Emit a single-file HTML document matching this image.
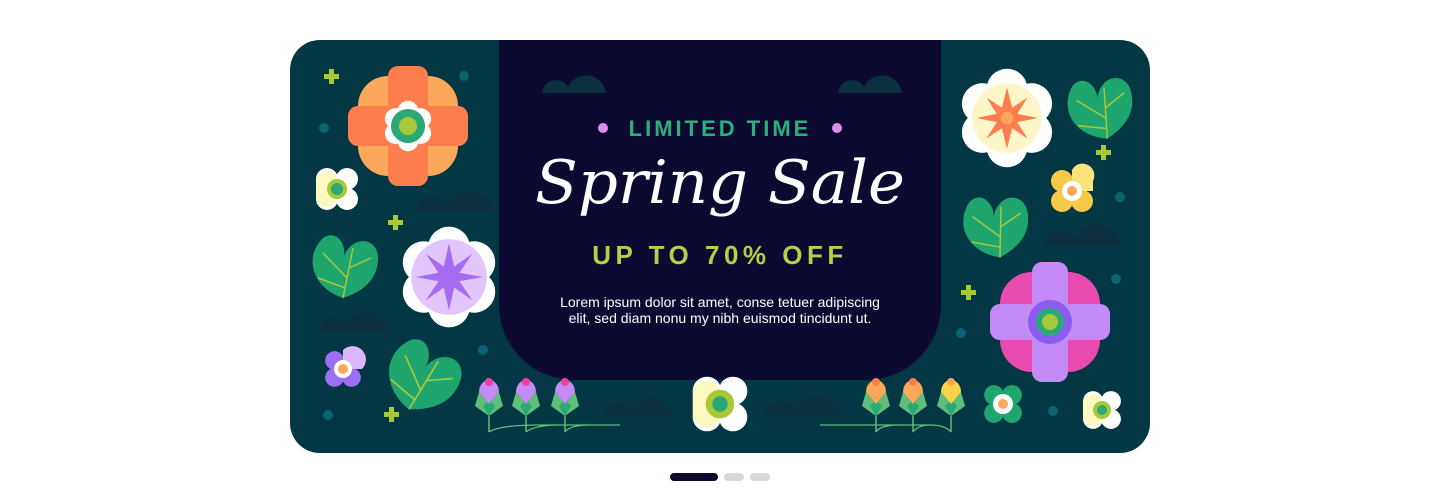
<!DOCTYPE html>
<html><head><meta charset="utf-8"><style>
html,body{margin:0;padding:0;background:#fff;width:1440px;height:498px;overflow:hidden}
svg{display:block}
</style></head><body>
<svg width="1440" height="498" viewBox="0 0 1440 498" xmlns="http://www.w3.org/2000/svg">
<defs>
<clipPath id="c"><rect x="290" y="40" width="860" height="413" rx="30"/></clipPath>
<g id="scal"><circle r="10" cx="0" cy="-14"/><circle r="10" cx="12" cy="-7"/><circle r="10" cx="12" cy="7"/><circle r="10" cx="0" cy="14"/><circle r="10" cx="-12" cy="7"/><circle r="10" cx="-12" cy="-7"/><circle r="16"/></g>
<g id="four"><circle cx="-10" cy="-10" r="11"/><circle cx="10" cy="-10" r="11"/><circle cx="10" cy="10" r="11"/><circle cx="-10" cy="10" r="11"/></g>
<g id="leaf"><path d="M0 40 C-30 30 -40 0 -20 -20 C-5 -30 5 -10 0 0 C10 -25 35 -20 35 0 C35 25 15 35 0 40Z" fill="#1fa66e"/><path d="M0 40 L10 -10 M4 20 L-20 -5 M6 10 L28 0 M2 30 L-25 20" stroke="#a8c83a" stroke-width="1.5" fill="none"/></g>
<g id="cloud" fill="#0b2f3d"><path d="M-30 0 A14 14 0 0 1 -4 -6 A20 20 0 0 1 34 0Z"/></g>
<g id="tulip"><path d="M-10 0 L-14 14 L0 24 L14 14 L10 0 L0 12Z" fill="#5fbf7a"/><path d="M-6 14 L0 24 L6 14 L0 8Z" fill="#2aa876"/><line x1="0" y1="24" x2="0" y2="40" stroke="#5fbf7a" stroke-width="1.5"/></g>
</defs>
<g clip-path="url(#c)">
<rect x="290" y="40" width="860" height="413" fill="#023743"/>
<path d="M499 40 H941 V305 A75 75 0 0 1 866 380 H574 A75 75 0 0 1 499 305Z" fill="#0c0a30"/>
<use href="#cloud" transform="translate(572,93)"/>
<use href="#cloud" transform="translate(868,93)"/>
<use href="#cloud" transform="translate(452,212) scale(1.2)"/>
<use href="#cloud" transform="translate(350,332) scale(1.1)"/>
<use href="#cloud" transform="translate(1080,246) scale(1.2)"/>
<use href="#cloud" transform="translate(636,417) scale(1.1)"/>
<use href="#cloud" transform="translate(800,417) scale(1.2)"/>
<g fill="#0c6472"><circle cx="464" cy="76" r="5"/><circle cx="324" cy="128" r="5"/><circle cx="483" cy="350" r="5"/><circle cx="328" cy="415" r="5"/><circle cx="1120" cy="197" r="5"/><circle cx="1116" cy="279" r="5"/><circle cx="961" cy="333" r="5"/><circle cx="1053" cy="411" r="5"/></g>
<g fill="#a8c83a"><path d="M329 69h5v5h5v5h-5v5h-5v-5h-5v-5h5z"/><path d="M393 215h5v5h5v5h-5v5h-5v-5h-5v-5h5z"/><path d="M389 407h5v5h5v5h-5v5h-5v-5h-5v-5h5z"/><path d="M1101 145h5v5h5v5h-5v5h-5v-5h-5v-5h5z"/><path d="M966 285h5v5h5v5h-5v5h-5v-5h-5v-5h5z"/></g>
<g transform="translate(408,126)">
<rect x="-50" y="-50" width="100" height="100" rx="30" fill="#fba85a"/>
<rect x="-20" y="-60" width="40" height="120" rx="10" fill="#fd7d4f"/>
<rect x="-60" y="-20" width="120" height="40" rx="10" fill="#fd7d4f"/>
<use href="#scal" fill="#fff" transform="scale(1.05)"/><circle r="17" fill="#2aa876"/><circle r="9" fill="#a8c83a"/>
</g>
<g transform="translate(337,189)"><use href="#four" fill="#fff"/><path d="M-21 -10 A11 11 0 0 1 0 -10 L0 10 A11 11 0 0 1 -21 10Z" fill="#fafac0"/><circle r="10" fill="#a8c83a"/><circle r="6" fill="#2aa876"/></g>
<g transform="translate(449,277) scale(2.1)"><use href="#scal" fill="#fff"/><circle r="18" fill="#e2c6fb"/><path d="M0 -16 L2.5 -5 L11 -11 L5 -2 L16 0 L5 2 L11 11 L2.5 5 L0 16 L-2.5 5 L-11 11 L-5 2 L-16 0 L-5 -2 L-11 -11 L-2.5 -5Z" fill="#a56bf0"/></g>
<use href="#leaf" transform="translate(343,258)"/>
<use href="#leaf" transform="translate(424,368) scale(1.1) rotate(20)"/>
<g transform="translate(343,369)"><use href="#four" fill="#9b6ef3" transform="scale(0.85)"/><path d="M0 -19 A10 10 0 0 1 19 0 L0 0Z" fill="#d9b8f8"/><circle r="9" fill="#fff"/><circle r="5" fill="#fba85a"/></g>
<g transform="translate(489,392)"><use href="#tulip"/><path d="M-10 0 A10 12 0 0 1 10 0 L0 12Z" fill="#c48bf6"/><circle cy="-10" r="4" fill="#f03fa5"/></g>
<g transform="translate(526,392)"><use href="#tulip"/><path d="M-10 0 A10 12 0 0 1 10 0 L0 12Z" fill="#c48bf6"/><circle cy="-10" r="4" fill="#f03fa5"/></g>
<g transform="translate(565,392)"><use href="#tulip"/><path d="M-10 0 A10 12 0 0 1 10 0 L0 12Z" fill="#c48bf6"/><circle cy="-10" r="4" fill="#f03fa5"/></g>
<g transform="translate(876,392)"><use href="#tulip"/><path d="M-10 0 A10 12 0 0 1 10 0 L0 12Z" fill="#fba85a"/><circle cy="-10" r="4" fill="#fd7d4f"/></g>
<g transform="translate(913,392)"><use href="#tulip"/><path d="M-10 0 A10 12 0 0 1 10 0 L0 12Z" fill="#fba85a"/><circle cy="-10" r="4" fill="#fd7d4f"/></g>
<g transform="translate(951,392)"><use href="#tulip"/><path d="M-10 0 A10 12 0 0 1 10 0 L0 12Z" fill="#f7d34a"/><circle cy="-10" r="4" fill="#fba85a"/></g>
<path d="M489 432 Q500 425 540 425 H620 M526 432 Q535 425 560 425 M565 432 Q570 425 590 425 M820 425 H930 Q945 425 951 432 M876 432 Q880 425 900 425 M913 432 Q918 425 930 425" stroke="#5fbf7a" stroke-width="1.3" fill="none"/>
<g transform="translate(720,404) scale(1.3)"><use href="#four" fill="#fff"/><path d="M-21 -10 A11 11 0 0 1 0 -10 L0 10 A11 11 0 0 1 -21 10Z" fill="#fafac0"/><circle r="11" fill="#a8c83a"/><circle r="6" fill="#2aa876"/></g>
<g transform="translate(1007,118) scale(2.05)"><use href="#scal" fill="#fff"/><circle r="17" fill="#fdf6c8"/><path d="M0 -15 L2.5 -5 L10 -10 L5 -2 L15 0 L5 2 L10 10 L2.5 5 L0 15 L-2.5 5 L-10 10 L-5 2 L-15 0 L-5 -2 L-10 -10 L-2.5 -5Z" fill="#fd7d4f"/><circle r="3" fill="#fba85a"/></g>
<use href="#leaf" transform="translate(1097,100) rotate(-15)"/>
<use href="#leaf" transform="translate(993,218) rotate(-10)"/>
<g transform="translate(1072,191)"><use href="#four" fill="#f7c948"/><path d="M0 -21 A11 11 0 0 1 21 -10 L21 0 L0 0Z" fill="#fbe27a"/><circle r="10" fill="#fff"/><circle r="5" fill="#fba85a"/></g>
<g transform="translate(1050,322)">
<rect x="-50" y="-50" width="100" height="100" rx="32" fill="#e94bb0"/>
<rect x="-18" y="-60" width="36" height="120" rx="10" fill="#c48bf6"/>
<rect x="-60" y="-18" width="120" height="36" rx="10" fill="#c48bf6"/>
<circle r="22" fill="#8a5cf0"/><circle r="14" fill="#2aa876"/><circle r="8" fill="#a8c83a"/>
</g>
<g transform="translate(1003,404)"><use href="#four" fill="#1fa66e" transform="scale(0.9)"/><circle r="10" fill="#fff"/><circle r="5" fill="#fba85a"/></g>
<g transform="translate(1102,410)"><use href="#four" fill="#fff" transform="scale(0.9)"/><path d="M-19 -9 A10 10 0 0 1 0 -9 L0 9 A10 10 0 0 1 -19 9Z" fill="#fafac0"/><circle r="9" fill="#a8c83a"/><circle r="5" fill="#2aa876"/></g>
<circle cx="603" cy="128" r="5" fill="#e18df0"/><circle cx="837" cy="128" r="5" fill="#e18df0"/>
<text x="720" y="136" text-anchor="middle" font-family="Liberation Sans, sans-serif" font-weight="bold" font-size="22" letter-spacing="3" fill="#2bb17d">LIMITED TIME</text>
<text x="720" y="203" text-anchor="middle" font-family="DejaVu Serif, serif" font-style="italic" font-size="60" fill="#fff" textLength="370" lengthAdjust="spacingAndGlyphs">Spring Sale</text>
<text x="720" y="264" text-anchor="middle" font-family="Liberation Sans, sans-serif" font-weight="bold" font-size="26" letter-spacing="4.5" fill="#b5cf46">UP TO 70% OFF</text>
<text x="720" y="307" text-anchor="middle" font-family="Liberation Sans, sans-serif" font-size="14" fill="#fff">Lorem ipsum dolor sit amet, conse tetuer adipiscing</text>
<text x="720" y="323" text-anchor="middle" font-family="Liberation Sans, sans-serif" font-size="14" fill="#fff">elit, sed diam nonu my nibh euismod tincidunt ut.</text>
</g>
<rect x="670" y="473" width="48" height="8" rx="4" fill="#0c0a30"/>
<rect x="724" y="473" width="20" height="8" rx="4" fill="#d9d9d9"/>
<rect x="750" y="473" width="20" height="8" rx="4" fill="#d9d9d9"/>
</svg>
</body></html>
